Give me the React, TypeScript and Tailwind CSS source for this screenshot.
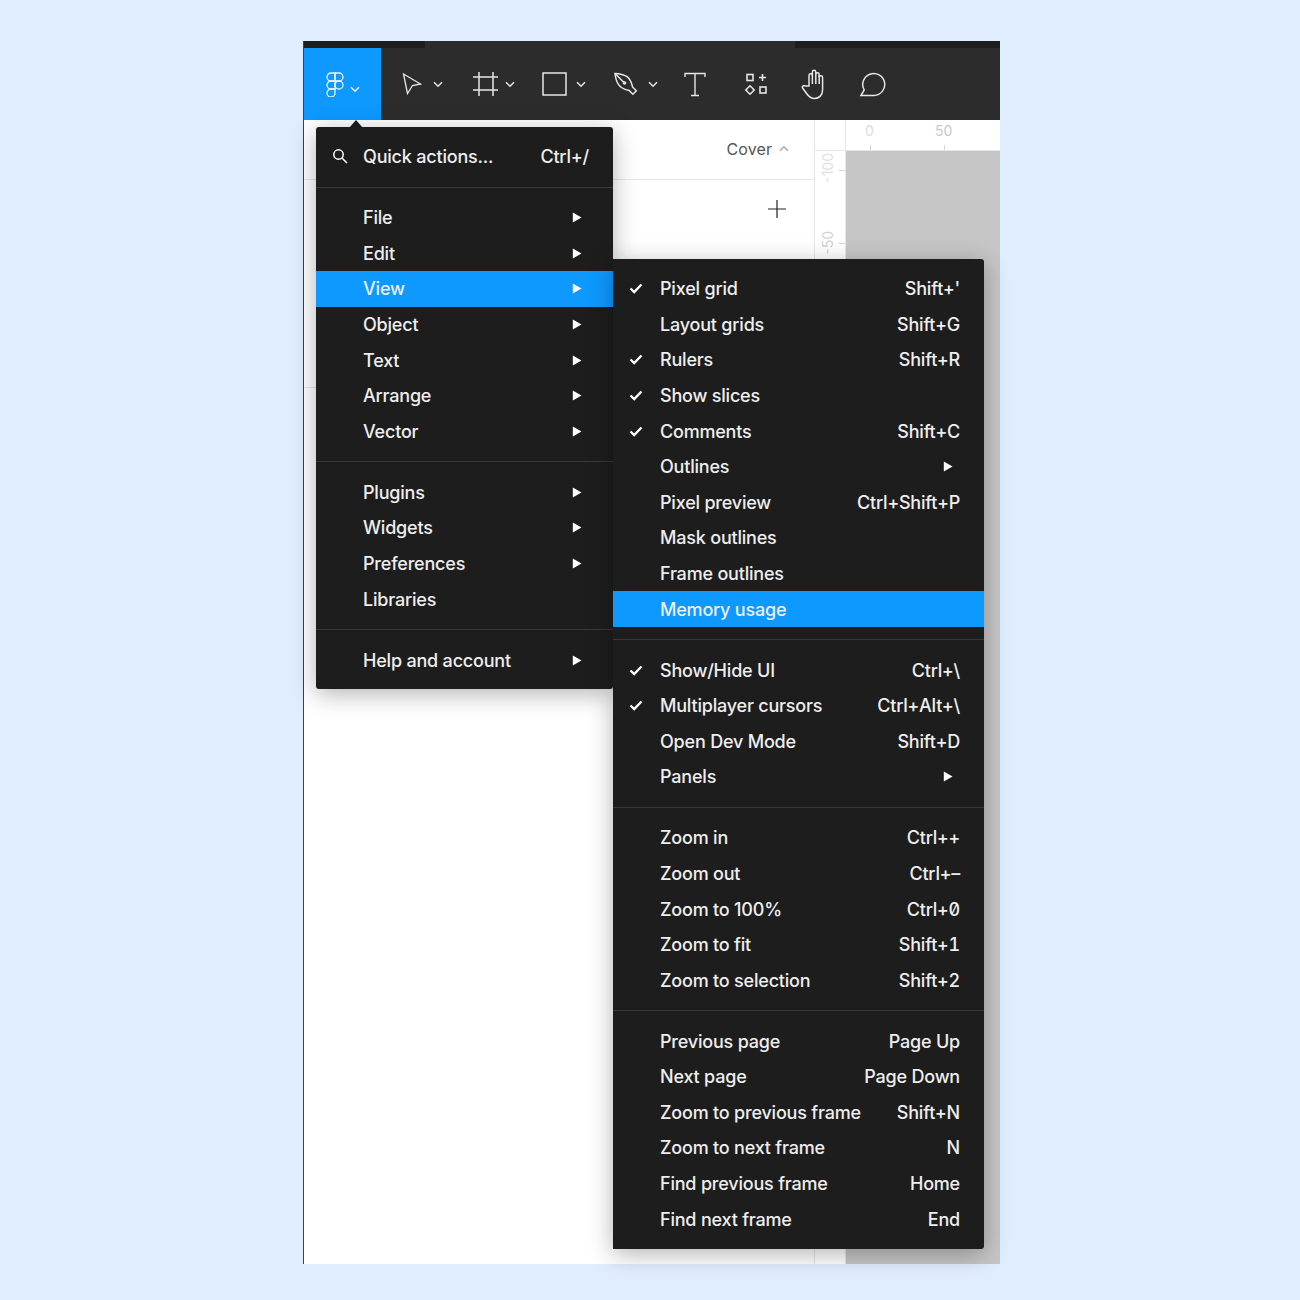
const Chevron = ({ up = false }: { up?: boolean }) => (
  <svg width="10" height="7" viewBox="0 0 10 7" fill="none" stroke="currentColor" strokeWidth="1.5" className={up ? "rotate-180" : ""}>
    <path d="M1 1.2l4 4 4-4" />
  </svg>
);

const Arrow = () => (
  <svg width="10" height="11" viewBox="0 0 10 11" className="text-white" fill="currentColor">
    <path d="M0.8 0.5L9.5 5.5L0.8 10.5z" />
  </svg>
);

const Check = () => (
  <svg width="14" height="11" viewBox="0 0 14 11" fill="none" stroke="white" strokeWidth="2.4">
    <path d="M1.5 5.5L5.2 9L12.5 1.5" />
  </svg>
);

const FigmaLogo = () => (
  <svg width="18" height="25" viewBox="0 0 18 25" fill="none" stroke="currentColor" strokeWidth="1.3">
    <path d="M9 1H5a4 4 0 000 8h4z" />
    <path d="M9 1h4a4 4 0 010 8H9z" />
    <path d="M9 9H5a4 4 0 000 8h4z" />
    <circle cx="13" cy="13" r="4" />
    <path d="M5 17a4 4 0 104 4v-4z" />
  </svg>
);

const Tool = ({ children, caret = false, className = "" }: { children: React.ReactNode; caret?: boolean; className?: string }) => (
  <div className={`flex items-center text-[#e6e6e6] ${className}`}>
    {children}
    {caret && <Chevron />}
  </div>
);

type Item = { label: string; key?: string; check?: boolean; sub?: boolean; active?: boolean };

const mainGroups: Item[][] = [
  [
    { label: "File", sub: true },
    { label: "Edit", sub: true },
    { label: "View", sub: true, active: true },
    { label: "Object", sub: true },
    { label: "Text", sub: true },
    { label: "Arrange", sub: true },
    { label: "Vector", sub: true },
  ],
  [
    { label: "Plugins", sub: true },
    { label: "Widgets", sub: true },
    { label: "Preferences", sub: true },
    { label: "Libraries" },
  ],
  [{ label: "Help and account", sub: true }],
];

const viewGroups: Item[][] = [
  [
    { label: "Pixel grid", key: "Shift+'", check: true },
    { label: "Layout grids", key: "Shift+G" },
    { label: "Rulers", key: "Shift+R", check: true },
    { label: "Show slices", check: true },
    { label: "Comments", key: "Shift+C", check: true },
    { label: "Outlines", sub: true },
    { label: "Pixel preview", key: "Ctrl+Shift+P" },
    { label: "Mask outlines" },
    { label: "Frame outlines" },
    { label: "Memory usage", active: true },
  ],
  [
    { label: "Show/Hide UI", key: "Ctrl+\\", check: true },
    { label: "Multiplayer cursors", key: "Ctrl+Alt+\\", check: true },
    { label: "Open Dev Mode", key: "Shift+D" },
    { label: "Panels", sub: true },
  ],
  [
    { label: "Zoom in", key: "Ctrl++" },
    { label: "Zoom out", key: "Ctrl+–" },
    { label: "Zoom to 100%", key: "Ctrl+0" },
    { label: "Zoom to fit", key: "Shift+1" },
    { label: "Zoom to selection", key: "Shift+2" },
  ],
  [
    { label: "Previous page", key: "Page Up" },
    { label: "Next page", key: "Page Down" },
    { label: "Zoom to previous frame", key: "Shift+N" },
    { label: "Zoom to next frame", key: "N" },
    { label: "Find previous frame", key: "Home" },
    { label: "Find next frame", key: "End" },
  ],
];

function Row({ item, main }: { item: Item; main?: boolean }) {
  return (
    <div className={`flex h-[35.6px] items-center ${item.active ? "bg-[#0d99ff]" : ""} ${main ? "pl-[47px] pr-[31px]" : "pl-[47px] pr-[24px]"}`}>
      {!main && item.check && (
        <span className="-ml-[31px] mr-[17px] flex w-[14px]">
          <Check />
        </span>
      )}
      <span className="flex-1 whitespace-nowrap">{item.label}</span>
      {item.key && <span className="whitespace-nowrap slashed-zero tabular-nums">{item.key}</span>}
      {item.sub && (
        <span className={main ? "" : "mr-[7px]"}>
          <Arrow />
        </span>
      )}
    </div>
  );
}

function Menu({ groups, main }: { groups: Item[][]; main?: boolean }) {
  return (
    <>
      {groups.map((group, i) => (
        <div key={i} className={i > 0 ? "mt-[12.2px] border-t border-[#383838] pt-[12.2px]" : ""}>
          {group.map((item) => (
            <Row key={item.label} item={item} main={main} />
          ))}
        </div>
      ))}
    </>
  );
}

export default function App() {
  return (
    <div className="h-[1300px] w-[1300px] bg-[#e0edff] pl-[303px] pt-[41px] font-['Inter',sans-serif]">
      <div className="relative flex h-[1223px] w-[697px] flex-col border-l border-[#3a3f4a] bg-white">
        {/* toolbar */}
        <div className="relative flex h-[79px] bg-[#2c2c2c]">
          <div className="absolute left-0 top-0 h-[7px] w-[121px] bg-[#1e1e1e]" />
          <div className="absolute right-0 top-0 h-[7px] w-[205px] bg-[#1e1e1e]" />
          <div className="mt-[7px] flex h-[72px] w-[77px] items-center justify-center gap-[6px] bg-[#0d99ff] pt-[1px] text-[#e8f5ff]">
            <FigmaLogo />
            <span className="mt-[9px]">
              <Chevron />
            </span>
          </div>
          <div className="flex flex-1 items-center pl-[21px] pt-[7px]">
            <Tool caret className="w-[71px] gap-[11px]">
              <svg width="20" height="24" viewBox="0 0 20 24" fill="none" stroke="currentColor" strokeWidth="1.3">
                <path d="M1.5 2l17 10-8 1.5-5 8z" />
              </svg>
            </Tool>
            <Tool caret className="w-[69px] gap-[7px]">
              <svg width="25" height="24" viewBox="0 0 25 24" fill="none" stroke="currentColor" strokeWidth="1.5">
                <path d="M0 5h25M0 18h25M6 0v24M20 0v24" />
              </svg>
            </Tool>
            <Tool caret className="w-[72px] gap-[9px]">
              <svg width="25" height="24" viewBox="0 0 25 24" fill="none" stroke="currentColor" strokeWidth="1.5">
                <rect x="1" y="1" width="23" height="22" />
              </svg>
            </Tool>
            <Tool caret className="w-[70px] gap-[10px]">
              <svg width="24" height="24" viewBox="0 0 24 24" fill="none" stroke="currentColor" strokeWidth="1.5">
                <path d="M1 1.5c4.5.2 9 1.3 12 3.2 3 2 4.5 6 5.7 10.5l3.6 3.6-3.4 3.4-3.6-3.6c-4.5-1-8.5-2.7-10.5-5.7C2.900 10.500 1.500 6 1 1.500z" />
                <path d="M1 1.500l9 9" />
                <circle cx="10.500" cy="11" r="1.800" fill="currentColor" stroke="none" />
              </svg>
            </Tool>
            <Tool className="w-[60px]">
              <svg width="22" height="25" viewBox="0 0 22 25" fill="none" stroke="currentColor" strokeWidth="1.400">
                <path d="M1 5V1.500h20V5M11 1.500v22M7 23.500h8" />
              </svg>
            </Tool>
            <Tool className="w-[57px]">
              <svg width="24" height="22" viewBox="0 0 24 22" fill="none" stroke="currentColor" strokeWidth="1.600">
                <rect x="3" y="1.500" width="6" height="6" />
                <path d="M15 4.500h7M18.500 1v7" />
                <path d="M6 12.800l4.200 4.200L6 21.200 1.800 17z" />
                <rect x="16" y="14" width="6" height="6" />
              </svg>
            </Tool>
            <Tool className="w-[58px]">
              <svg width="28" height="31" viewBox="0 0 28 31" fill="none" stroke="currentColor" strokeWidth="1.500">
                <path d="M8 17V6.500a1.700 1.700 0 013.400 0V3a1.700 1.700 0 013.400 0v2.500a1.700 1.700 0 013.400 0v3a1.700 1.700 0 013.400 0V21c0 5-3.500 8.500-8 8.500-4 0-6-2-8-5l-4-5.500c-1-1.500 1-3 2.500-2z" />
                <path d="M11.400 6v9M14.800 5v10M18.200 6v9" />
              </svg>
            </Tool>
            <Tool>
              <svg width="28" height="25" viewBox="0 0 28 25" fill="none" stroke="currentColor" strokeWidth="1.500">
                <path d="M2 23.500l3.200-5.500A11 11 0 1115 23.500z" />
              </svg>
            </Tool>
          </div>
        </div>

        {/* page behind the menus */}
        <div className="flex flex-1">
          <div className="w-[510px]">
            <div className="flex h-[60px] items-center justify-end gap-[7px] border-b border-[#e6e6e6] pb-[2px] pr-[25px] text-[16px] tracking-[0.1px] text-[#555]">
              <span>Cover</span>
              <span className="text-[#aaa]">
                <Chevron up />
              </span>
            </div>
            <div className="flex h-[59px] justify-end pr-[28px] pt-[20px]">
              <svg width="18" height="18" viewBox="0 0 18 18" stroke="#222" strokeWidth="1.200">
                <path d="M0 9h18M9 0v18" />
              </svg>
            </div>
            <div className="h-[149px] border-b border-[#e6e6e6]" />
          </div>
          <div className="flex flex-1 flex-col border-l border-[#e6e6e6]">
            <div className="flex h-[31px] border-b border-[#e6e6e6]">
              <div className="w-[31px] border-r border-[#e6e6e6]" />
              <div className="relative flex-1 text-[14px] text-[#dcdcdc]">
                <span className="absolute left-[19px] top-0">0</span>
                <span className="absolute left-[89px] top-0 text-[#c8c8c8]">50</span>
                <div className="absolute bottom-0 left-[24px] h-[5px] w-px bg-[#d6d6d6]" />
                <div className="absolute bottom-0 left-[98px] h-[5px] w-px bg-[#d6d6d6]" />
              </div>
            </div>
            <div className="flex flex-1">
              <div className="relative w-[31px] border-r border-[#e6e6e6] text-[14px] text-[#e0e0e0]">
                <span className="absolute left-[2px] top-[2px] rotate-180 [writing-mode:vertical-rl]">-100</span>
                <span className="absolute left-[2px] top-[80px] rotate-180 text-[#d2d2d2] [writing-mode:vertical-rl]">-50</span>
                <div className="absolute right-0 top-[19px] h-px w-[6px] bg-[#d6d6d6]" />
                <div className="absolute right-0 top-[92px] h-px w-[6px] bg-[#d6d6d6]" />
              </div>
              <div className="flex-1 bg-[#c6c6c6]" />
            </div>
          </div>
        </div>

        {/* pointer */}
        <div className="absolute left-[45px] top-[79px] h-0 w-0 border-x-[7px] border-b-[8px] border-x-transparent border-b-[#1e1e1e]" />

        {/* main menu */}
        <div className="absolute left-[12px] top-[86px] w-[297px] rounded-[3px] bg-[#1d1d1d] pb-[11px] pt-[11px] text-[18px] font-medium tracking-[-0.2px] text-[#eeeeee] shadow-[0_5px_24px_rgba(0,0,0,0.3)]">
          <div className="flex h-[36px] items-center pl-[16px] pr-[24px]">
            <svg width="16" height="16" viewBox="0 0 16 16" fill="none" stroke="white" strokeWidth="1.500" className="mr-[15px]">
              <circle cx="6.500" cy="6.500" r="4.700" />
              <path d="M10 10l5 5" />
            </svg>
            <span className="flex-1">Quick actions...</span>
            <span>Ctrl+/</span>
          </div>
          <div className="mt-[13px] border-t border-[#383838] pt-[12px]">
            <Menu groups={mainGroups} main />
          </div>
        </div>

        {/* view submenu */}
        <div className="absolute left-[309px] top-[218px] w-[371px] rounded-r-[3px] bg-[#1d1d1d] pb-[12px] pt-[12px] text-[18px] font-medium tracking-[-0.2px] text-[#eeeeee] shadow-[0_5px_24px_rgba(0,0,0,0.3)]">
          <Menu groups={viewGroups} />
        </div>
      </div>
    </div>
  );
}
